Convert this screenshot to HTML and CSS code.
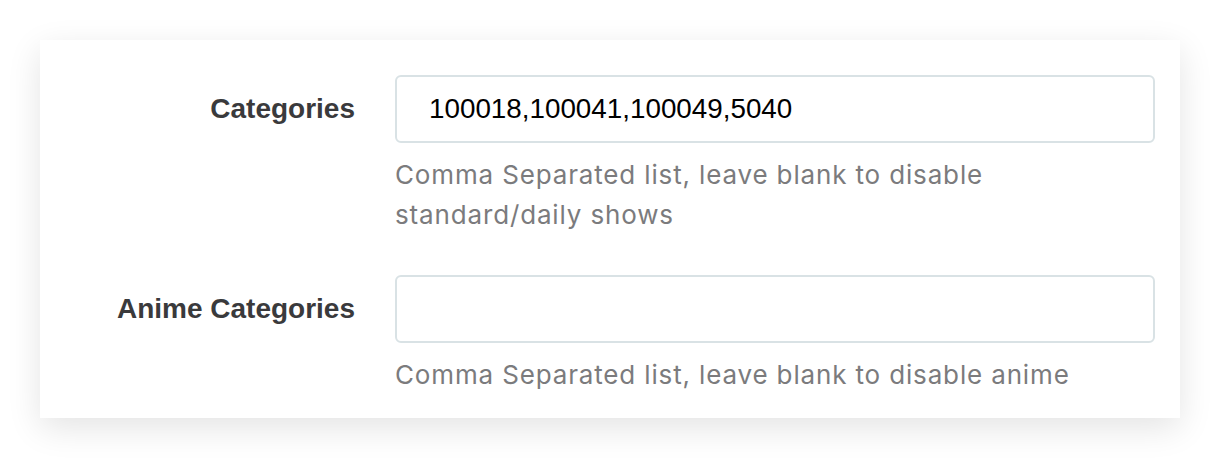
FILE: index.html
```html
<!DOCTYPE html>
<html lang="en">
<head>
<meta charset="utf-8">
<title>Categories</title>
<link rel="stylesheet" href="styles.css">
</head>
<body>
<div class="card">
  <form class="form">
    <div class="row">
      <label class="label" for="cat">Categories</label>
      <div class="field">
        <input class="input" id="cat" type="text" value="100018,100041,100049,5040">
        <p class="help">Comma Separated list, leave blank to disable standard/daily shows</p>
      </div>
    </div>
    <div class="row">
      <label class="label" for="anime">Anime Categories</label>
      <div class="field">
        <input class="input" id="anime" type="text" value="">
        <p class="help">Comma Separated list, leave blank to disable anime</p>
      </div>
    </div>
  </form>
</div>
</body>
</html>
```
FILE: styles.css
```css
html, body {
  margin: 0;
  padding: 0;
  background: #ffffff;
}
body {
  padding: 40px;
  font-family: Inter, "Liberation Sans", Arial, sans-serif;
}
.card {
  background: #ffffff;
  box-shadow: 0 10px 32px rgba(0, 0, 0, 0.11);
  padding: 35px 25px 23px 0;
}
.form {
  display: flex;
  flex-direction: column;
  gap: 40px;
}
.row {
  display: grid;
  grid-template-columns: 315px 1fr;
  column-gap: 40px;
  align-items: start;
}
.label {
  height: 68px;
  display: flex;
  align-items: center;
  justify-content: flex-end;
  font-family: "Liberation Sans", Arial, sans-serif;
  font-weight: 700;
  font-size: 28px;
  color: #3a3a3c;
}
.field {
  display: flex;
  flex-direction: column;
}
.input {
  box-sizing: border-box;
  height: 68px;
  width: 100%;
  margin: 0;
  padding: 0 32px;
  border: 2px solid #d9e2e5;
  border-radius: 6px;
  background: #ffffff;
  font-family: "Liberation Sans", Arial, sans-serif;
  font-size: 27.8px;
  color: #000000;
  outline: none;
}
.help {
  margin: 12px 0 0;
  font-size: 26px;
  letter-spacing: 0.85px;
  line-height: 40px;
  color: #7b7b7d;
}
```
